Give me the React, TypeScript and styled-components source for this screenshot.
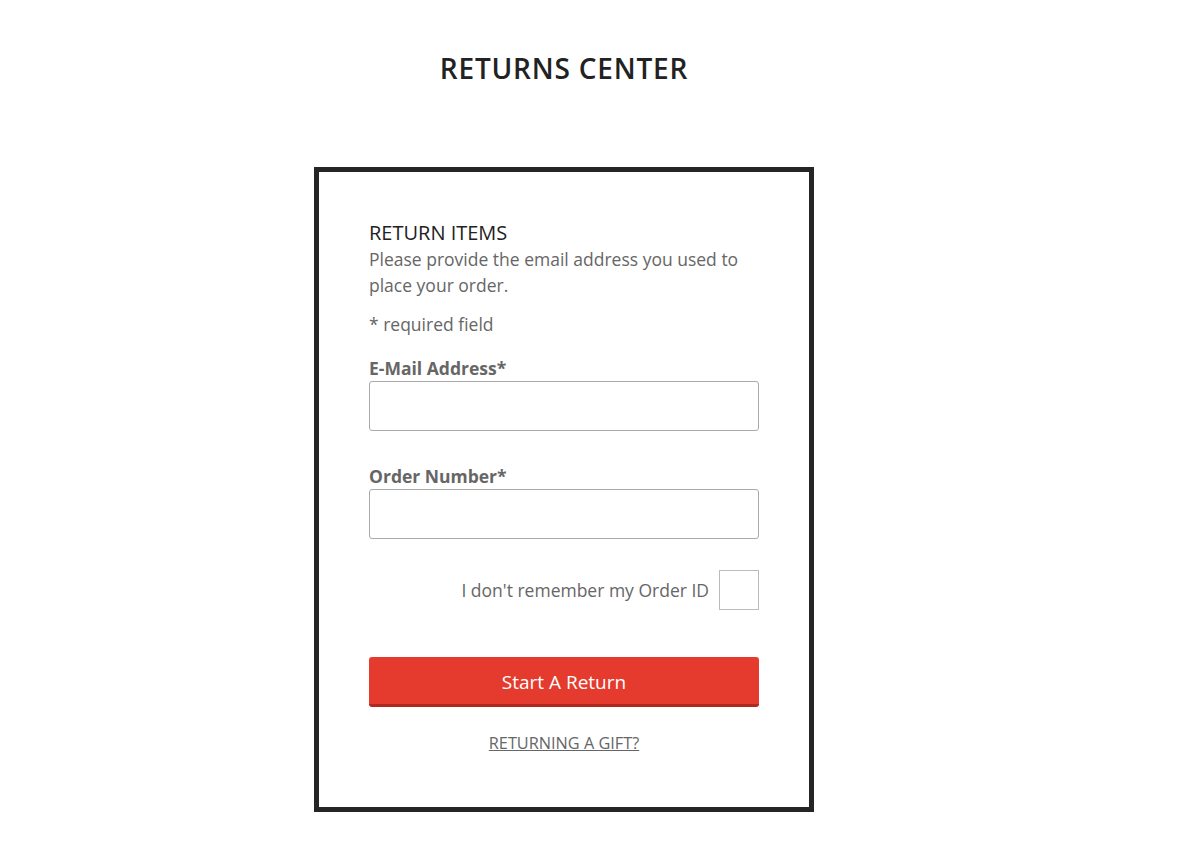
import React from 'react';
import styled, { createGlobalStyle } from 'styled-components';

const GlobalStyle = createGlobalStyle`
  body {
    margin: 0;
    background: #fff;
    font-family: 'Open Sans', 'Liberation Sans', sans-serif;
  }
`;

const Page = styled.div`
  width: 1128px;
  display: flex;
  flex-direction: column;
  align-items: center;
`;

const Title = styled.h1`
  margin: 48px 0 0;
  font-size: 28px;
  line-height: 40px;
  font-weight: 600;
  letter-spacing: 0.8px;
  color: #222;
`;

const Card = styled.div`
  margin-top: 79px;
  width: 500px;
  box-sizing: border-box;
  border: 5px solid #252525;
  padding: 48px 50px 53px;
  display: flex;
  flex-direction: column;
`;

const Heading = styled.div`
  font-size: 20px;
  line-height: 26px;
  color: #222;
`;

const Text = styled.p<{ $gap?: number }>`
  margin: ${(p) => p.$gap ?? 0}px 0 0;
  font-size: 17.5px;
  line-height: 26px;
  color: #666;
`;

const Field = styled.label<{ $gap: number }>`
  display: flex;
  flex-direction: column;
  margin-top: ${(p) => p.$gap}px;
`;

const Label = styled.span`
  font-size: 17.5px;
  font-weight: 700;
  line-height: 24px;
  color: #666;
  margin-bottom: 1px;
`;

const Input = styled.input`
  box-sizing: border-box;
  height: 50px;
  width: 100%;
  border: 1px solid #aaa;
  border-radius: 3px;
  padding: 0 12px;
  font: inherit;
  font-size: 17px;
  outline: none;
`;

const CheckRow = styled.label`
  margin-top: 31px;
  display: flex;
  justify-content: flex-end;
  align-items: center;
  gap: 10px;
  font-size: 17.5px;
  color: #666;
`;

const Box = styled.input`
  appearance: none;
  margin: 0;
  width: 40px;
  height: 40px;
  box-sizing: border-box;
  border: 1px solid #bbb;
  background: #fff;
`;

const Button = styled.button`
  margin-top: 47px;
  height: 50px;
  box-sizing: border-box;
  width: 100%;
  border: none;
  border-bottom: 3px solid #b0281f;
  border-radius: 3px;
  background: #e43b2e;
  color: #fff;
  font-family: inherit;
  font-size: 19px;
  padding-top: 3px;
  cursor: pointer;
`;

const GiftLink = styled.a`
  margin-top: 25px;
  align-self: center;
  font-size: 16.3px;
  color: #666;
  text-decoration: underline;
`;

export default function App() {
  return (
    <>
      <GlobalStyle />
      <Page>
        <Title>RETURNS CENTER</Title>
        <Card>
          <Heading>RETURN ITEMS</Heading>
          <Text>Please provide the email address you used to place your order.</Text>
          <Text $gap={13}>* required field</Text>
          <Field $gap={19}>
            <Label>E-Mail Address*</Label>
            <Input type="email" />
          </Field>
          <Field $gap={33}>
            <Label>Order Number*</Label>
            <Input type="text" />
          </Field>
          <CheckRow>
            I don't remember my Order ID
            <Box type="checkbox" />
          </CheckRow>
          <Button>Start A Return</Button>
          <GiftLink href="#">RETURNING A GIFT?</GiftLink>
        </Card>
      </Page>
    </>
  );
}
